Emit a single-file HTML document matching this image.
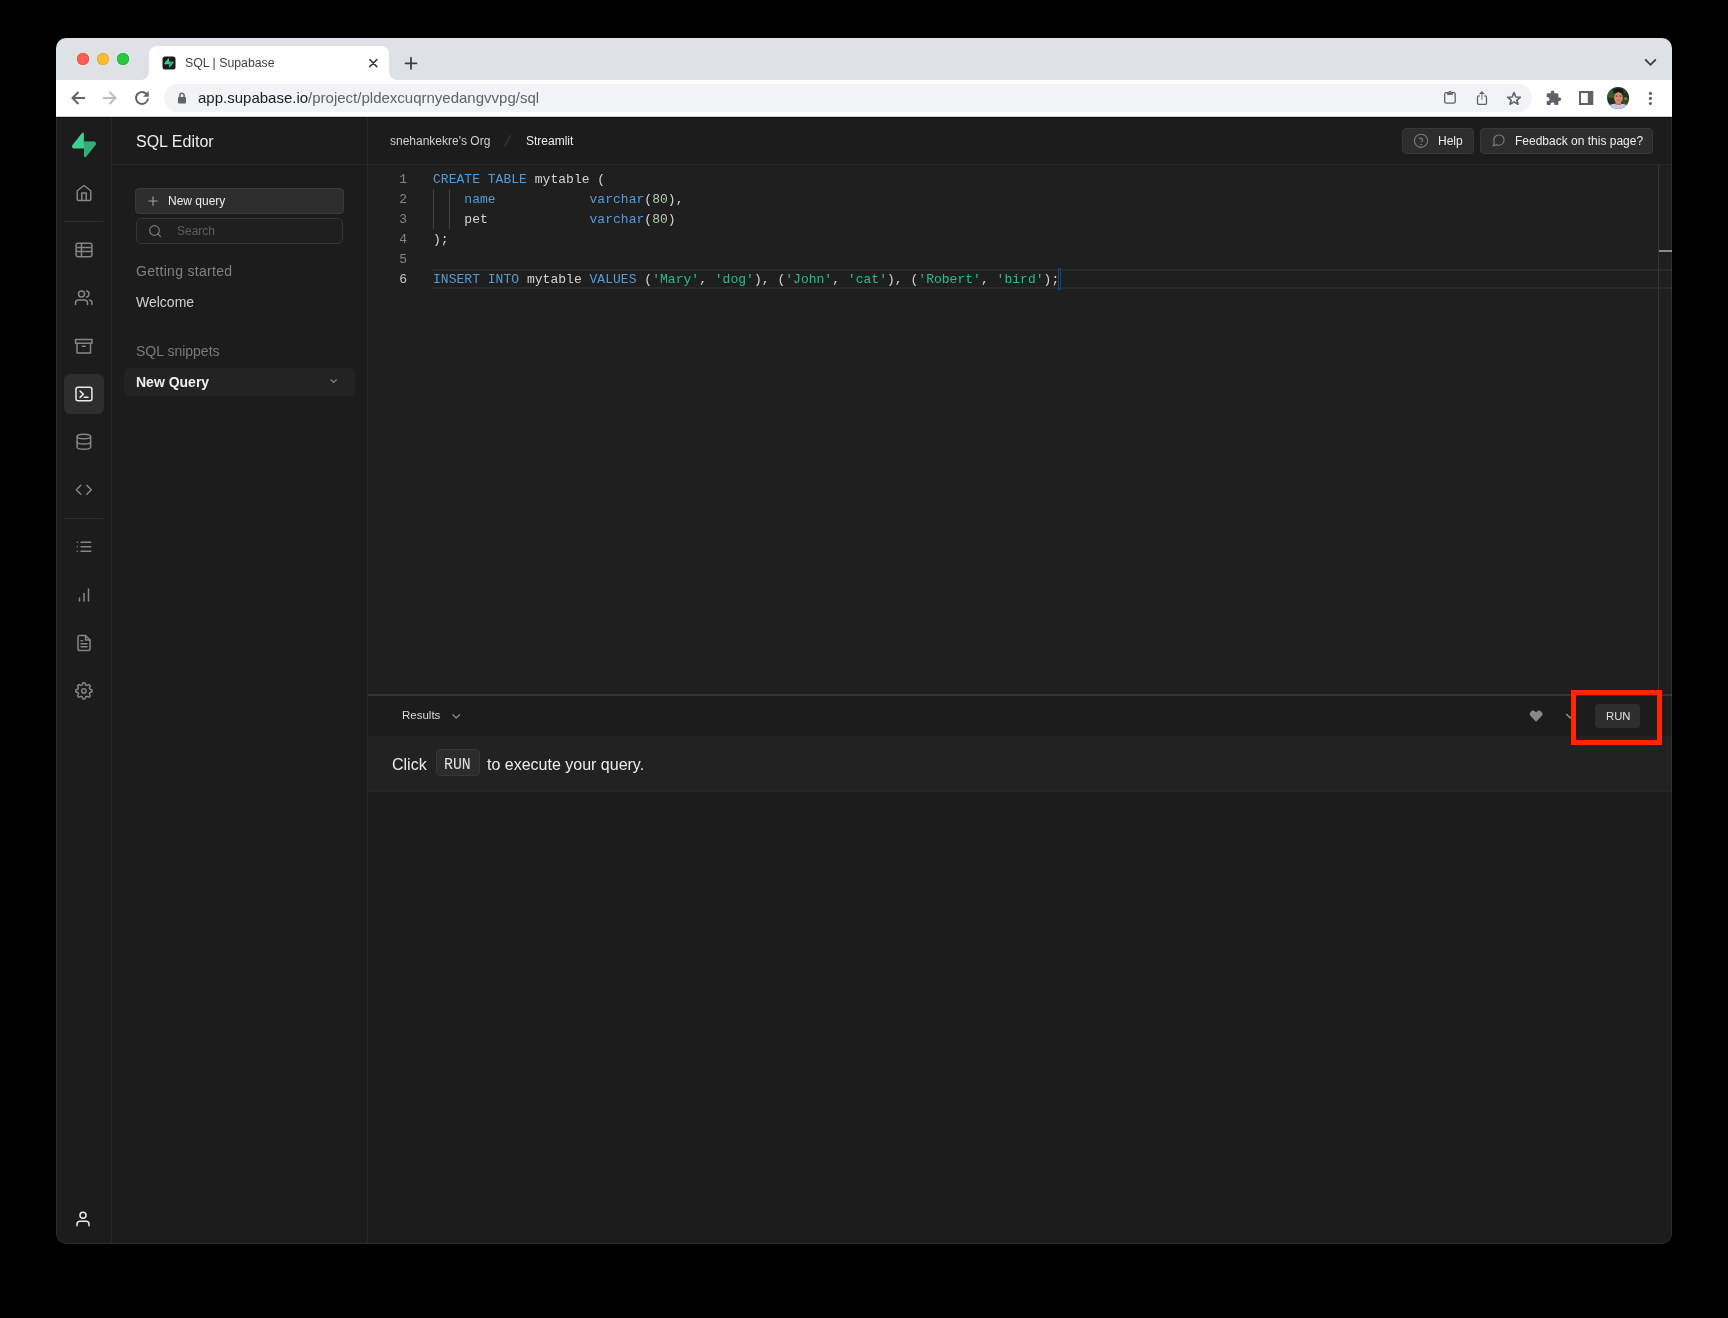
<!DOCTYPE html>
<html><head><meta charset="utf-8">
<style>
*{margin:0;padding:0;box-sizing:border-box}
html,body{width:1728px;height:1318px;background:#000;overflow:hidden;font-family:"Liberation Sans",sans-serif}
#win{position:absolute;left:0;top:0;width:1728px;height:1318px;clip-path:inset(38px 56px 74px 56px round 10px);will-change:transform}
.a{position:absolute}
.t{position:absolute;white-space:pre;line-height:1}
svg.ov{position:absolute;left:0;top:0;width:1728px;height:1318px;overflow:visible}
.code{font-family:"Liberation Mono",monospace;font-size:13px;color:#d4d4d4;letter-spacing:0.025px}
.kw{color:#569cd6}.num{color:#b5cea8}.str{color:#27bf88}
.ln{position:absolute;width:40px;text-align:right;font-family:"Liberation Mono",monospace;font-size:13px;color:#858585;line-height:20px}
.cl{position:absolute;left:433px;white-space:pre;line-height:20px}
</style></head><body>
<div id="win">
  <!-- tab strip -->
  <div class="a" style="left:56px;top:38px;width:1616px;height:42px;background:#dee1e6"></div>
  <div class="a" style="left:77px;top:53px;width:12px;height:12px;border-radius:50%;background:#ff5f57;box-shadow:inset 0 0 0 0.6px #e0443e"></div>
  <div class="a" style="left:97px;top:53px;width:12px;height:12px;border-radius:50%;background:#febc2e;box-shadow:inset 0 0 0 0.6px #dea123"></div>
  <div class="a" style="left:117px;top:53px;width:12px;height:12px;border-radius:50%;background:#28c840;box-shadow:inset 0 0 0 0.6px #1aab29"></div>
  <!-- tab -->
  <div class="a" style="left:149px;top:46px;width:240px;height:34px;background:#fff;border-radius:8px 8px 0 0"></div>
  <div class="t" style="left:185px;top:57px;font-size:12.3px;color:#3c4043">SQL | Supabase</div>
  <!-- toolbar -->
  <div class="a" style="left:56px;top:80px;width:1616px;height:37px;background:#fff"></div>
  <div class="a" style="left:164px;top:84px;width:1368px;height:28px;background:#f1f3f4;border-radius:14px"></div>
  <div class="t" style="left:198px;top:90px;font-size:15px;color:#202124">app.supabase.io<span style="color:#5f6368">/project/pldexcuqrnyedangvvpg/sql</span></div>
  <!-- app -->
  <div class="a" style="left:56px;top:117px;width:1616px;height:1127px;background:#1c1c1c"></div>
  <div class="a" style="left:56px;top:116px;width:1616px;height:1px;background:#d4d4d4"></div>
  <div class="a" style="left:56px;top:117px;width:1616px;height:1px;background:#111"></div>
  <div class="a" style="left:111px;top:118px;width:1px;height:1125px;background:#282828"></div>
  <div class="a" style="left:367px;top:118px;width:1px;height:1125px;background:#282828"></div>
  <div class="a" style="left:112px;top:164px;width:1560px;height:1px;background:#282828"></div>
  <!-- icon bar -->
  <div class="a" style="left:64px;top:221px;width:39px;height:1px;background:#2e2e2e"></div>
  <div class="a" style="left:64px;top:518px;width:39px;height:1px;background:#2e2e2e"></div>
  <div class="a" style="left:64px;top:374px;width:40px;height:40px;background:#2e2e2e;border-radius:6px"></div>
  <!-- sidebar -->
  <div class="t" style="left:136px;top:134px;font-size:16px;color:#ededed">SQL Editor</div>
  <div class="a" style="left:135px;top:188px;width:209px;height:26px;background:#2e2e2e;border:1px solid #3a3a3a;border-radius:4px"></div>
  <div class="t" style="left:168px;top:195px;font-size:12px;color:#ededed">New query</div>
  <div class="a" style="left:136px;top:218px;width:207px;height:26px;background:#1f1f1f;border:1px solid #353535;border-radius:5px"></div>
  <div class="t" style="left:177px;top:225px;font-size:12px;color:#5e5e5e">Search</div>
  <div class="t" style="left:136px;top:264px;font-size:14px;letter-spacing:0.3px;color:#808080">Getting started</div>
  <div class="t" style="left:136px;top:295px;font-size:14px;color:#d0d0d0">Welcome</div>
  <div class="t" style="left:136px;top:344px;font-size:14px;color:#7a7a7a">SQL snippets</div>
  <div class="a" style="left:124px;top:368px;width:231px;height:28px;background:#232323;border-radius:6px"></div>
  <div class="t" style="left:136px;top:375px;font-size:14px;font-weight:bold;color:#f0f0f0">New Query</div>
  <!-- header -->
  <div class="t" style="left:390px;top:135px;font-size:12px;color:#d0d0d0">snehankekre's Org</div>
  <div class="t" style="left:526px;top:135px;font-size:12px;color:#ededed">Streamlit</div>
  <svg class="ov" viewBox="0 0 1728 1318"><path d="M510.6,135.2 L504.6,146.6" stroke="#3c3c3c" stroke-width="1.1"/></svg>
  <div class="a" style="left:1402px;top:128px;width:72px;height:26px;background:#2d2d2d;border:1px solid #383838;border-radius:4px"></div>
  <div class="t" style="left:1438px;top:135px;font-size:12px;color:#ededed">Help</div>
  <div class="a" style="left:1480px;top:128px;width:173px;height:26px;background:#2d2d2d;border:1px solid #383838;border-radius:4px"></div>
  <div class="t" style="left:1515px;top:135px;font-size:12px;color:#ededed">Feedback on this page?</div>
  <!-- editor -->
  <div class="a" style="left:368px;top:165px;width:1304px;height:529px;background:#1f1f1f"></div>
  <div class="a" style="left:432px;top:269px;width:1240px;height:20px;border-top:2px solid #2a2a2a;border-bottom:2px solid #2a2a2a"></div>
  <div class="a" style="left:433px;top:189px;width:1px;height:40px;background:#404040"></div>
  <div class="a" style="left:449px;top:189px;width:1px;height:40px;background:#404040"></div>
  <div class="a" style="left:1658px;top:165px;width:1px;height:529px;background:#353535"></div>
  <div class="a" style="left:1659px;top:250px;width:13px;height:2px;background:#8a8a8a"></div>
  <div class="a" style="left:1058px;top:268px;width:3px;height:22px;border:1px solid #0f4584"></div>
  <div class="ln" style="left:367px;top:170px">1<br>2<br>3<br>4<br>5<br><span style="color:#c6c6c6">6</span></div>
  <div class="code cl" style="top:170px"><span class="kw">CREATE TABLE</span> mytable (
    <span class="kw">name</span>            <span class="kw">varchar</span>(<span class="num">80</span>),
    pet             <span class="kw">varchar</span>(<span class="num">80</span>)
);

<span class="kw">INSERT INTO</span> mytable <span class="kw">VALUES</span> (<span class="str">'Mary'</span>, <span class="str">'dog'</span>), (<span class="str">'John'</span>, <span class="str">'cat'</span>), (<span class="str">'Robert'</span>, <span class="str">'bird'</span>);</div>
  <!-- results -->
  <div class="a" style="left:368px;top:694px;width:1304px;height:2px;background:#333"></div>
  <div class="a" style="left:368px;top:736px;width:1304px;height:56px;background:#222"></div>
  <div class="a" style="left:368px;top:791px;width:1304px;height:1px;background:#262626"></div>
  <div class="t" style="left:402px;top:710px;font-size:11.5px;color:#d8d8d8">Results</div>
  <div class="a" style="left:1595px;top:704px;width:45px;height:24px;background:#2e2e2e;border-radius:4px"></div>
  <div class="t" style="left:1606px;top:711px;font-size:11.3px;color:#e0e0e0">RUN</div>
  <div class="t" style="left:392px;top:757px;font-size:16px;color:#ededed">Click</div>
  <div class="a" style="left:436px;top:749px;width:44px;height:27px;background:#2c2c2c;border:1px solid #383838;border-radius:4px"></div>
  <div class="t" style="left:443.9px;top:756.5px;font-family:'Liberation Mono',monospace;font-size:16.5px;color:#e0e0e0;transform:scaleX(0.9);transform-origin:0 0">RUN</div>
  <div class="t" style="left:487px;top:757px;font-size:16px;color:#ededed">to execute your query.</div>

  <svg class="ov" viewBox="0 0 1728 1318">
    <!-- favicon -->
    <path d="M141,80 A8,8 0 0 0 149,72 V80 Z M397,80 A8,8 0 0 1 389,72 V80 Z" fill="#fff"/>
    <rect x="162.5" y="56.5" width="13" height="13" rx="2.5" fill="#1c1c1c"/>
    <g transform="translate(164.4,58.2) scale(0.085)">
      <path d="M63.7076 110.284C60.8481 113.885 55.0502 111.912 54.9813 107.314L53.9738 40.0627L99.1935 40.0627C107.384 40.0627 111.952 49.5228 106.859 55.9374L63.7076 110.284Z" fill="#2fb57a"/>
      <path d="M45.317 2.07103C48.1765 -1.53037 53.9745 0.442937 54.0434 5.041L54.4849 72.2922H9.83113C1.64038 72.2922 -2.92775 62.8321 2.1655 56.4175L45.317 2.07103Z" fill="#3ecf8e"/>
    </g>
    <!-- tab close / plus / dropdown -->
    <g stroke="#3c4043" stroke-width="1.6" fill="none" stroke-linecap="round">
      <path d="M369.8,59.6 L376.8,66.6 M376.8,59.6 L369.8,66.6"/>
      <path d="M405.5,63.3 H416.5 M411,57.8 V68.8" stroke-width="1.8"/>
      <path d="M1645.7,60 L1650.5,64.8 L1655.3,60" stroke-width="1.8"/>
    </g>
    <!-- nav -->
    <g stroke="#5f6368" stroke-width="2" fill="none">
      <path d="M85,98 H73 M78.5,92 L72.5,98 L78.5,104"/>
      <path d="M103,98 H115 M109.5,92 L115.5,98 L109.5,104" stroke="#b9bcc0"/>
      <path d="M146.4,93.8 A6,6 0 1 0 148,98.5"/>
    </g>
    <path d="M148.8,91 V96.8 H143 Z" fill="#5f6368"/>
    <rect x="178" y="97" width="8" height="6.5" rx="1" fill="#5f6368"/>
    <path d="M179.9,97.5 V95.3 A2.1,2.1 0 0 1 184.1,95.3 V97.5" stroke="#5f6368" stroke-width="1.5" fill="none"/>
    <!-- right toolbar icons -->
    <g stroke="#5f6368" stroke-width="1.6" fill="none">
      <rect x="1444.7" y="92.55" width="10.5" height="10.6" rx="1.6" stroke-width="1.3"/>
      <path d="M1479.8,95.9 H1479 A1.5,1.5 0 0 0 1477.5,97.4 V102.9 A1.5,1.5 0 0 0 1479,104.4 H1485 A1.5,1.5 0 0 0 1486.5,102.9 V97.4 A1.5,1.5 0 0 0 1485,95.9 H1484.2" stroke-width="1.3"/><path d="M1481.9,93.6 V99.7" stroke="#8f9296" stroke-width="1.3"/>
      <path d="M1514,92.6 L1515.9,97 L1520.3,97.3 L1516.9,100.2 L1518,104.2 L1514,101.9 L1510,104.2 L1511.1,100.2 L1507.7,97.3 L1512.1,97 Z" stroke-linejoin="round"/>
      <rect x="1580" y="92" width="12.3" height="12" stroke-width="2"/>
    </g>
    <rect x="1447.1" y="92.3" width="5.7" height="2.6" fill="#5f6368"/><circle cx="1449.95" cy="92.3" r="1.6" fill="#5f6368"/><circle cx="1449.95" cy="92.5" r="0.6" fill="#c8cacd"/><path d="M1479,94.1 L1481.9,91 L1484.8,94.1 Z" fill="#5f6368"/>
    <rect x="1587.8" y="92" width="4.5" height="12" fill="#5f6368"/>
    <g transform="translate(1545.3,89.9) scale(0.69)"><path d="M20.5 11H19V7c0-1.1-.9-2-2-2h-4V3.5C13 2.12 11.88 1 10.5 1S8 2.12 8 3.5V5H4c-1.1 0-1.99.9-1.99 2v3.8H3.5c1.49 0 2.7 1.21 2.7 2.7s-1.21 2.7-2.7 2.7H2V20c0 1.1.9 2 2 2h3.8v-1.5c0-1.490 1.21-2.7 2.7-2.7 1.49 0 2.7 1.21 2.7 2.7V22H17c1.1 0 2-.9 2-2v-4h1.5c1.38 0 2.5-1.12 2.5-2.5S21.88 11 20.5 11z" fill="#5f6368"/></g>
    <defs>
      <radialGradient id="av" cx="0.5" cy="0.45" r="0.55">
        <stop offset="0" stop-color="#b07a5a"/><stop offset="0.45" stop-color="#8a5a40"/><stop offset="0.7" stop-color="#3d4a2c"/><stop offset="1" stop-color="#1f3320"/>
      </radialGradient>
      <linearGradient id="sbg" x1="0" y1="0" x2="1" y2="1"><stop offset="0" stop-color="#249361"/><stop offset="1" stop-color="#3ecf8e"/></linearGradient>
    </defs>
    <clipPath id="avc"><circle cx="1618.1" cy="98" r="11"/></clipPath>
    <g clip-path="url(#avc)">
      <rect x="1606" y="86" width="24" height="24" fill="#223719"/>
      <circle cx="1611" cy="94" r="4" fill="#3d5a2a"/>
      <circle cx="1625" cy="101" r="3.5" fill="#344f26"/>
      <circle cx="1624" cy="91" r="2" fill="#6a3a5a" opacity="0.6"/>
      <circle cx="1625.5" cy="98.5" r="1.5" fill="#9a9a80" opacity="0.6"/>
      <path d="M1606,110 L1606,106.5 Q1612,103 1618,103.5 Q1624,103 1630,106.5 L1630,110 Z" fill="#c4c8ef"/>
      <rect x="1615.6" y="101" width="5.4" height="4" fill="#d27b58"/>
      <ellipse cx="1618.4" cy="97.6" rx="4.4" ry="5.4" fill="#d98a70"/>
      <path d="M1613.2,95 Q1612.5,88.5 1618.5,88.2 Q1624,88.3 1623.8,94 Q1622,91.5 1618.3,91.8 Q1614.5,91.8 1613.2,95 Z" fill="#15151c"/>
      <ellipse cx="1616.6" cy="96" rx="0.9" ry="0.6" fill="#3a2015"/>
      <ellipse cx="1620.5" cy="96" rx="0.9" ry="0.6" fill="#3a2015"/>
      <ellipse cx="1618.6" cy="100.2" rx="1.8" ry="0.7" fill="#b06050" opacity="0.8"/>
    </g>
    <g fill="#5f6368"><circle cx="1650.4" cy="93.4" r="1.6"/><circle cx="1650.4" cy="98.4" r="1.6"/><circle cx="1650.4" cy="103.5" r="1.6"/></g>
    <!-- supabase logo -->
    <g transform="translate(72,132.6) scale(0.22)">
      <path d="M63.7076 110.284C60.8481 113.885 55.0502 111.912 54.9813 107.314L53.9738 40.0627L99.1935 40.0627C107.384 40.0627 111.952 49.5228 106.859 55.9374L63.7076 110.284Z" fill="#3ecf8e"/>
      <path d="M63.7076 110.284C60.8481 113.885 55.0502 111.912 54.9813 107.314L53.9738 40.0627L99.1935 40.0627C107.384 40.0627 111.952 49.5228 106.859 55.9374L63.7076 110.284Z" fill="#1f6e4a" fill-opacity="0.35"/>
      <path d="M45.317 2.07103C48.1765 -1.53037 53.9745 0.442937 54.0434 5.041L54.4849 72.2922H9.83113C1.64038 72.2922 -2.92775 62.8321 2.1655 56.4175L45.317 2.07103Z" fill="#3ecf8e"/>
    </g>
    <!-- sidebar icons -->
    <g stroke="#858585" stroke-width="2" fill="none" stroke-linecap="round" stroke-linejoin="round">
      <g transform="translate(75,184) scale(0.75)"><path d="M3 9l9-7 9 7v11a2 2 0 0 1-2 2H5a2 2 0 0 1-2-2z"/><polyline points="9 22 9 12 15 12 15 22"/></g>
      <g transform="translate(74.75,288.75) scale(0.75)"><path d="M17 21v-2a4 4 0 0 0-4-4H5a4 4 0 0 0-4 4v2"/><circle cx="9" cy="7" r="4"/><path d="M23 21v-2a4 4 0 0 0-3-3.87"/><path d="M16 3.13a4 4 0 0 1 0 7.75"/></g>
      <g transform="translate(74.75,337.35) scale(0.75)"><polyline points="21 8 21 21 3 21 3 8"/><rect x="1" y="3" width="22" height="5"/><line x1="10" y1="12" x2="14" y2="12"/></g>
      <g transform="translate(74.85,432.8) scale(0.75)"><ellipse cx="12" cy="5" rx="9" ry="3"/><path d="M21 12c0 1.66-4 3-9 3s-9-1.34-9-3"/><path d="M3 5v14c0 1.66 4 3 9 3s9-1.34 9-3V5"/></g>
      <g transform="translate(74.8,480.75) scale(0.75)"><polyline points="16 18 22 12 16 6"/><polyline points="8 6 2 12 8 18"/></g>
      <g transform="translate(75,537.8) scale(0.75)"><line x1="8" y1="6" x2="21" y2="6"/><line x1="8" y1="12" x2="21" y2="12"/><line x1="8" y1="18" x2="21" y2="18"/><line x1="3" y1="6" x2="3.01" y2="6"/><line x1="3" y1="12" x2="3.01" y2="12"/><line x1="3" y1="18" x2="3.01" y2="18"/></g>
      <g transform="translate(75,586) scale(0.75)"><line x1="12" y1="20" x2="12" y2="10"/><line x1="18" y1="20" x2="18" y2="4"/><line x1="6" y1="20" x2="6" y2="16"/></g>
      <g transform="translate(75,634) scale(0.75)"><path d="M14 2H6a2 2 0 0 0-2 2v16a2 2 0 0 0 2 2h12a2 2 0 0 0 2-2V8z"/><polyline points="14 2 14 8 20 8"/><line x1="16" y1="13" x2="8" y2="13"/><line x1="16" y1="17" x2="8" y2="17"/><polyline points="10 9 9 9 8 9"/></g>
    </g>
    <g stroke="#858585" stroke-width="1.5" fill="none" stroke-linejoin="round">
      <rect x="76.1" y="243.2" width="15.8" height="13.6" rx="2"/>
      <path d="M76.1,247.5 H91.9 M76.1,251.6 H91.9 M81.5,243.2 V256.8"/>
      <path d="M83.90,682.75 L84.11,682.76 L84.33,682.77 L84.54,682.81 L84.74,682.87 L84.94,683.00 L85.11,683.24 L85.25,683.64 L85.34,684.13 L85.43,684.54 L85.54,684.79 L85.67,684.93 L85.81,685.02 L85.96,685.09 L86.10,685.16 L86.25,685.22 L86.40,685.28 L86.55,685.34 L86.71,685.39 L86.87,685.43 L87.06,685.42 L87.32,685.32 L87.67,685.10 L88.08,684.82 L88.46,684.63 L88.75,684.58 L88.98,684.63 L89.17,684.73 L89.35,684.85 L89.51,684.99 L89.66,685.14 L89.81,685.29 L89.95,685.45 L90.07,685.63 L90.17,685.82 L90.22,686.05 L90.17,686.34 L89.98,686.72 L89.70,687.13 L89.48,687.48 L89.38,687.74 L89.37,687.93 L89.41,688.09 L89.46,688.25 L89.52,688.40 L89.58,688.55 L89.64,688.70 L89.71,688.84 L89.78,688.99 L89.87,689.13 L90.01,689.26 L90.26,689.37 L90.67,689.46 L91.16,689.55 L91.56,689.69 L91.80,689.86 L91.93,690.06 L91.99,690.26 L92.03,690.47 L92.04,690.69 L92.05,690.90 L92.04,691.11 L92.03,691.33 L91.99,691.54 L91.93,691.74 L91.80,691.94 L91.56,692.11 L91.16,692.25 L90.67,692.34 L90.26,692.43 L90.01,692.54 L89.87,692.67 L89.78,692.81 L89.71,692.96 L89.64,693.10 L89.58,693.25 L89.52,693.40 L89.46,693.55 L89.41,693.71 L89.37,693.87 L89.38,694.06 L89.48,694.32 L89.70,694.67 L89.98,695.08 L90.17,695.46 L90.22,695.75 L90.17,695.98 L90.07,696.17 L89.95,696.35 L89.81,696.51 L89.66,696.66 L89.51,696.81 L89.35,696.95 L89.17,697.07 L88.98,697.17 L88.75,697.22 L88.46,697.17 L88.08,696.98 L87.67,696.70 L87.32,696.48 L87.06,696.38 L86.87,696.37 L86.71,696.41 L86.55,696.46 L86.40,696.52 L86.25,696.58 L86.10,696.64 L85.96,696.71 L85.81,696.78 L85.67,696.87 L85.54,697.01 L85.43,697.26 L85.34,697.67 L85.25,698.16 L85.11,698.56 L84.94,698.80 L84.74,698.93 L84.54,698.99 L84.33,699.03 L84.11,699.04 L83.90,699.05 L83.69,699.04 L83.47,699.03 L83.26,698.99 L83.06,698.93 L82.86,698.80 L82.69,698.56 L82.55,698.16 L82.46,697.67 L82.37,697.26 L82.26,697.01 L82.13,696.87 L81.99,696.78 L81.84,696.71 L81.70,696.64 L81.55,696.58 L81.40,696.52 L81.25,696.46 L81.09,696.41 L80.93,696.37 L80.74,696.38 L80.48,696.48 L80.13,696.70 L79.72,696.98 L79.34,697.17 L79.05,697.22 L78.82,697.17 L78.63,697.07 L78.45,696.95 L78.29,696.81 L78.14,696.66 L77.99,696.51 L77.85,696.35 L77.73,696.17 L77.63,695.98 L77.58,695.75 L77.63,695.46 L77.82,695.08 L78.10,694.67 L78.32,694.32 L78.42,694.06 L78.43,693.87 L78.39,693.71 L78.34,693.55 L78.28,693.40 L78.22,693.25 L78.16,693.10 L78.09,692.96 L78.02,692.81 L77.93,692.67 L77.79,692.54 L77.54,692.43 L77.13,692.34 L76.64,692.25 L76.24,692.11 L76.00,691.94 L75.87,691.74 L75.81,691.54 L75.77,691.33 L75.76,691.11 L75.75,690.90 L75.76,690.69 L75.77,690.47 L75.81,690.26 L75.87,690.06 L76.00,689.86 L76.24,689.69 L76.64,689.55 L77.13,689.46 L77.54,689.37 L77.79,689.26 L77.93,689.13 L78.02,688.99 L78.09,688.84 L78.16,688.70 L78.22,688.55 L78.28,688.40 L78.34,688.25 L78.39,688.09 L78.43,687.93 L78.42,687.74 L78.32,687.48 L78.10,687.13 L77.82,686.72 L77.63,686.34 L77.58,686.05 L77.63,685.82 L77.73,685.63 L77.85,685.45 L77.99,685.29 L78.14,685.14 L78.29,684.99 L78.45,684.85 L78.63,684.73 L78.82,684.63 L79.05,684.58 L79.34,684.63 L79.72,684.82 L80.13,685.10 L80.48,685.32 L80.74,685.42 L80.93,685.43 L81.09,685.39 L81.25,685.34 L81.40,685.28 L81.55,685.22 L81.70,685.16 L81.84,685.09 L81.99,685.02 L82.13,684.93 L82.26,684.79 L82.37,684.54 L82.46,684.13 L82.55,683.64 L82.69,683.24 L82.86,683.00 L83.06,682.87 L83.26,682.81 L83.47,682.77 L83.69,682.76Z"/>
      <circle cx="83.9" cy="690.9" r="2.2"/>
    </g>
    <g stroke="#ececec" stroke-width="1.5" fill="none" stroke-linecap="round" stroke-linejoin="round">
      <rect x="76" y="387.3" width="15.9" height="13.4" rx="2"/>
      <path d="M80.1,391.1 L83.4,394.2 L80.1,397.4 M84.2,397.3 H88"/>
      <g transform="translate(74,1210) scale(0.75)" stroke-width="2"><path d="M20 21v-2a4 4 0 0 0-4-4H8a4 4 0 0 0-4 4v2"/><circle cx="12" cy="7" r="4"/></g>
    </g>
    <!-- sidebar misc -->
    <g stroke="#9a9a9a" stroke-width="2" fill="none" stroke-linecap="round">
      <g transform="translate(145.8,193.8) scale(0.6)"><line x1="12" y1="5" x2="12" y2="19"/><line x1="5" y1="12" x2="19" y2="12"/></g>
      <g transform="translate(147.9,223.9) scale(0.6)" stroke="#7a7a7a"><circle cx="11" cy="11" r="8"/><line x1="21" y1="21" x2="16.65" y2="16.65"/></g>
    </g>
    <path d="M330.5,379.3 L333.6,382.4 L336.7,379.3" stroke="#8a8a8a" stroke-width="1.2" fill="none"/>
    <!-- header icons -->
    <g stroke="#7c7c7c" stroke-width="1.1" fill="none" stroke-linecap="round">
      <circle cx="1421" cy="140.8" r="6.6"/>
      <path d="M1419.4,138.7 A1.85,1.75 0 1 1 1421.5,141.5"/>
      <path d="M1420.6,144.5 H1421.3"/>
      <g transform="translate(1491.4,133.2) scale(0.6)" stroke-width="1.8"><path d="M21 11.5a8.38 8.38 0 0 1-.9 3.8 8.5 8.5 0 0 1-7.6 4.7 8.38 8.38 0 0 1-3.8-.9L3 21l1.9-5.7a8.38 8.38 0 0 1-.9-3.8 8.5 8.5 0 0 1 4.7-7.6 8.38 8.38 0 0 1 3.8-.9h.5a8.48 8.48 0 0 1 8 8v.5z"/></g>
    </g>
    <!-- results icons -->
    <path d="M452.5,714.3 L456.2,718 L460,714.3" stroke="#9a9a9a" stroke-width="1.1" fill="none"/>
    <g transform="translate(1528.9,708.9) scale(0.6)"><path d="M20.84 4.61a5.5 5.5 0 0 0-7.78 0L12 5.670l-1.06-1.06a5.5 5.5 0 0 0-7.78 7.78l1.06 1.06L12 21.23l7.78-7.78 1.06-1.06a5.5 5.5 0 0 0 0-7.78z" fill="#888"/></g>
    <path d="M1566.3,714 L1570.2,717.9 L1574.1,714" stroke="#a0a0a0" stroke-width="1.1" fill="none"/>
    <rect x="1573.5" y="692.5" width="86" height="50" stroke="#ff2600" stroke-width="5" fill="none"/>
  </svg>
  <div class="a" style="left:56px;top:38px;width:1616px;height:1206px;border:1px solid rgba(255,255,255,0.075);border-radius:10px"></div>
</div>
</body></html>
